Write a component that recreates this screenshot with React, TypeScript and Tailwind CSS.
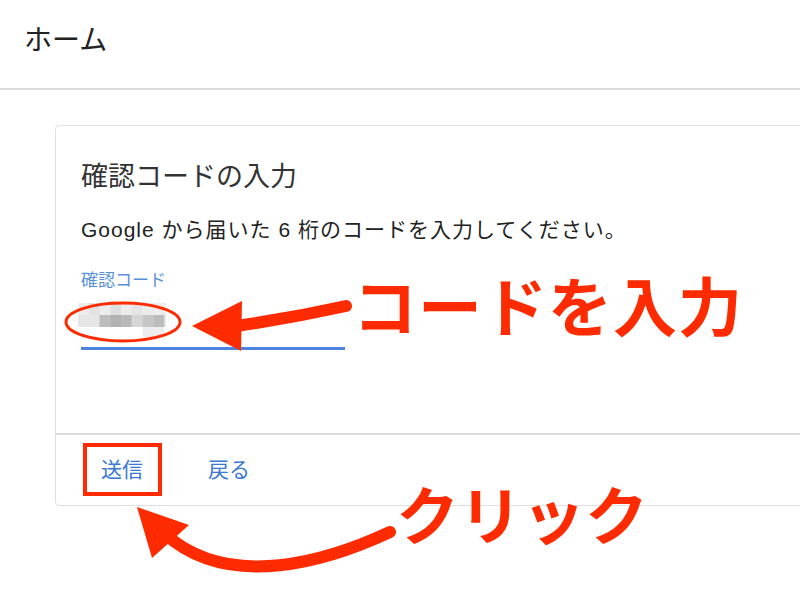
const jp = "font-['Liberation_Sans','Noto_Sans_CJK_JP',sans-serif]";

const CodeBlur = () => (
  <svg width="88" height="36" viewBox="0 0 90 36" preserveAspectRatio="none" className="block">
    <rect x="0" y="0" width="90" height="12" fill="#ececec" />
    <rect x="11" y="0" width="11" height="12" fill="#e2e2e2" />
    <rect x="33" y="0" width="11" height="12" fill="#dedede" />
    <rect x="55" y="0" width="11" height="12" fill="#e4e4e4" />
    <rect x="0" y="12" width="90" height="12" fill="#e6e6e6" />
    <rect x="22" y="12" width="11" height="12" fill="#bdbdbd" />
    <rect x="33" y="12" width="11" height="12" fill="#b2b2b2" />
    <rect x="44" y="12" width="11" height="12" fill="#b8b8b8" />
    <rect x="55" y="12" width="11" height="12" fill="#d6d6d6" />
    <rect x="66" y="12" width="11" height="12" fill="#c6c6c6" />
    <rect x="77" y="12" width="11" height="12" fill="#bcbcbc" />
    <rect x="66" y="24" width="22" height="10" fill="#ededed" />
  </svg>
);

const Annotations = () => (
  <svg width="800" height="600" className="absolute left-0 top-0 pointer-events-none">
    <ellipse cx="123" cy="322" rx="57" ry="19" fill="none" stroke="#fe2a00" strokeWidth="3" />
    <path d="M236 326 Q292 318 346 306" fill="none" stroke="#fe2a00" strokeWidth="12" strokeLinecap="round" />
    <polygon points="192,326 242,301 241,351" fill="#fe2a00" />
    <rect x="85" y="445" width="75" height="49" fill="none" stroke="#fe2a00" strokeWidth="4" />
    <path d="M390 532 C330 560 230 592 165 534" fill="none" stroke="#fe2a00" strokeWidth="12" strokeLinecap="round" />
    <polygon points="137,507 189,525 152,558" fill="#fe2a00" />
  </svg>
);

export default function App() {
  return (
    <div className={`relative w-[800px] h-[600px] overflow-hidden bg-white ${jp}`}>
      <header className="h-[90px] border-b-2 border-[#dadada] flex items-center pl-[24px] pb-[6px]">
        <h1 className="text-[28px] text-[#222] leading-none">ホーム</h1>
      </header>

      <div className="ml-[55px] mt-[35px] w-[780px] h-[381px] border border-[#e0e0e0] rounded-[4px] flex flex-col">
        <div className="h-[309px] border-b-2 border-[#dcdcdc] pl-[25px] pt-[38px]">
          <h2 className="text-[27px] text-[#333] leading-none">確認コードの入力</h2>
          <p className="mt-[28px] text-[21px] text-[#222] leading-none tracking-[1px]">
            Google から届いた 6 桁のコードを入力してください。
          </p>
          <div className="mt-[32px] w-[264px]">
            <label className="block text-[17px] text-[#5a8fd9] leading-none">確認コード</label>
            <div className="mt-[14px] -ml-[3px]">
              <CodeBlur />
            </div>
            <div className="mt-[8px] h-[3px] bg-[#4b84de]" />
          </div>
        </div>
        <div className="flex-1 flex items-center pl-[45px] gap-[65px] pb-[2px]">
          <button className="text-[21px] text-[#3a78d2] leading-none">送信</button>
          <button className="text-[21px] text-[#3a78d2] leading-none">戻る</button>
        </div>
      </div>

      <div className="absolute left-[353px] top-[271px] text-[64px] font-bold text-[#fe2a00] leading-none tracking-[1px] font-['Noto_Sans_CJK_JP',sans-serif]">
        コードを入力
      </div>
      <div className="absolute left-[396px] top-[480px] text-[63px] font-bold text-[#fe2a00] leading-none font-['Noto_Sans_CJK_JP',sans-serif]">
        クリック
      </div>
      <Annotations />
    </div>
  );
}
